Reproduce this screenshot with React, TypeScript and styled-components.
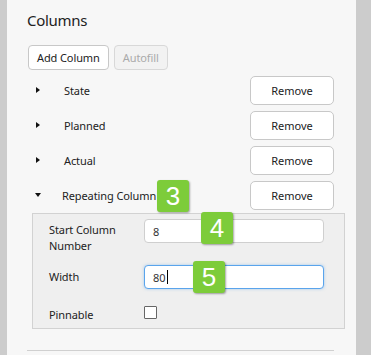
import React from 'react';
import styled, { createGlobalStyle } from 'styled-components';

const GlobalStyle = createGlobalStyle`
  html, body {
    margin: 0;
    padding: 0;
    background: #f7f7f7;
  }
  body {
    font-family: "Noto Sans", "Open Sans", sans-serif;
    color: #222;
  }
`;

const columns = ['State', 'Planned', 'Actual'];

export default function App() {
  return (
    <Page>
      <GlobalStyle />
      <SideBar $w={7} />
      <Panel>
        <Title>Columns</Title>
        <Toolbar>
          <Button>Add Column</Button>
          <Button disabled>Autofill</Button>
        </Toolbar>
        <Rows>
          {columns.map((c) => (
            <Row key={c}>
              <Caret />
              <RowLabel>{c}</RowLabel>
              <RemoveButton>Remove</RemoveButton>
            </Row>
          ))}
          <Row>
            <Caret $open />
            <RowLabel>Repeating Column</RowLabel>
            <RemoveButton>Remove</RemoveButton>
          </Row>
        </Rows>
        <Details>
          <FieldRow $h={35}>
            <FieldLabel>Start Column<br />Number</FieldLabel>
            <Field>8</Field>
          </FieldRow>
          <FieldRow $h={25} $mt={11}>
            <FieldLabel $top={4}>Width</FieldLabel>
            <Field $focused>80<TextCaret /></Field>
          </FieldRow>
          <FieldRow $h={20} $mt={15}>
            <FieldLabel $top={2}>Pinnable</FieldLabel>
            <Checkbox />
          </FieldRow>
        </Details>
        <Separator />
      </Panel>
      <SideBar $w={15} />
      <Badge style={{ left: 157, top: 180 }}>3</Badge>
      <Badge style={{ left: 201, top: 212 }}>4</Badge>
      <Badge style={{ left: 193, top: 261 }}>5</Badge>
    </Page>
  );
}

const Page = styled.div`
  position: relative;
  display: flex;
  width: 371px;
  height: 355px;
  overflow: hidden;
`;

const SideBar = styled.div<{ $w: number }>`
  flex: 0 0 ${({ $w }) => $w}px;
  background: #cccccc;
`;

const Panel = styled.div`
  flex: 1;
  background: #f7f7f7;
  padding: 9px 22px 0 20px;
  display: flex;
  flex-direction: column;
`;

const Title = styled.div`
  font-size: 15px;
  line-height: 22px;
  letter-spacing: -0.3px;
  color: #222;
`;

const Toolbar = styled.div`
  display: flex;
  gap: 5px;
  margin-top: 14px;
  margin-left: 1px;
`;

const Button = styled.button`
  height: 25px;
  padding: 0 8px;
  font-family: inherit;
  font-size: 11px;
  letter-spacing: -0.1px;
  color: #222;
  background: #fff;
  border: 1px solid #c8c8c8;
  border-radius: 4px;

  &:disabled {
    color: #aaa;
    background: #f2f2f2;
    border-color: #d8d8d8;
  }
`;

const Rows = styled.div`
  display: flex;
  flex-direction: column;
  gap: 7px;
  margin-top: 6px;
`;

const Row = styled.div`
  display: flex;
  align-items: center;
  height: 28px;
  padding-left: 9px;
`;

const Caret = styled.span<{ $open?: boolean }>`
  width: 0;
  height: 0;
  border-style: solid;
  ${({ $open }) =>
    $open
      ? `border-width: 4px 3.5px 0 3.5px; border-color: #111 transparent transparent transparent; margin-left: -1px; margin-right: 21px;`
      : `border-width: 3.5px 0 3.5px 4px; border-color: transparent transparent transparent #111; margin-right: 24px;`}
`;

const RowLabel = styled.span`
  flex: 1;
  font-size: 11px;
  letter-spacing: -0.1px;
  color: #222;
`;

const RemoveButton = styled.button`
  width: 84px;
  height: 29px;
  font-family: inherit;
  font-size: 11px;
  color: #222;
  background: #fff;
  border: 1px solid #c8c8c8;
  border-radius: 5px;
`;

const Details = styled.div`
  margin: 4px -11px 0 5px;
  background: #efefef;
  border: 1px solid #d2d2d2;
  padding: 5px 20px 5px 16px;
  height: 116px;
  box-sizing: border-box;
`;

const FieldRow = styled.div<{ $h: number; $mt?: number }>`
  display: flex;
  align-items: flex-start;
  height: ${({ $h }) => $h}px;
  margin-top: ${({ $mt }) => $mt ?? 0}px;
`;

const FieldLabel = styled.div<{ $top?: number }>`
  width: 95px;
  font-size: 11px;
  line-height: 16px;
  letter-spacing: -0.1px;
  color: #222;
  padding-top: ${({ $top }) => $top ?? 3}px;
`;

const Field = styled.div<{ $focused?: boolean }>`
  flex: 1;
  height: 24px;
  box-sizing: border-box;
  display: flex;
  align-items: center;
  padding: 0 8px;
  font-size: 11px;
  color: #333;
  background: #fff;
  border: 1px solid ${({ $focused }) => ($focused ? '#5aa4ec' : '#cfcfcf')};
  border-radius: 4px;
  box-shadow: ${({ $focused }) => ($focused ? '0 0 3px rgba(90,164,236,0.5)' : 'none')};
`;

const TextCaret = styled.span`
  display: inline-block;
  width: 1px;
  height: 14px;
  background: #000;
  margin-left: 1px;
`;

const Checkbox = styled.span`
  width: 13px;
  height: 13px;
  box-sizing: border-box;
  margin-top: 1px;
  border: 1.5px solid #666;
  border-radius: 1px;
  background: #fff;
`;

const Separator = styled.div`
  margin-top: 21px;
  height: 1px;
  background: #d0d0d0;
`;

const Badge = styled.div`
  position: absolute;
  width: 32px;
  height: 32px;
  display: flex;
  align-items: center;
  justify-content: center;
  background: #7dcc3a;
  border-radius: 3px;
  box-shadow: 1px 1px 2px rgba(0, 0, 0, 0.35);
  color: #fff;
  font-family: "Liberation Sans", Arial, sans-serif;
  font-size: 26px;
`;
